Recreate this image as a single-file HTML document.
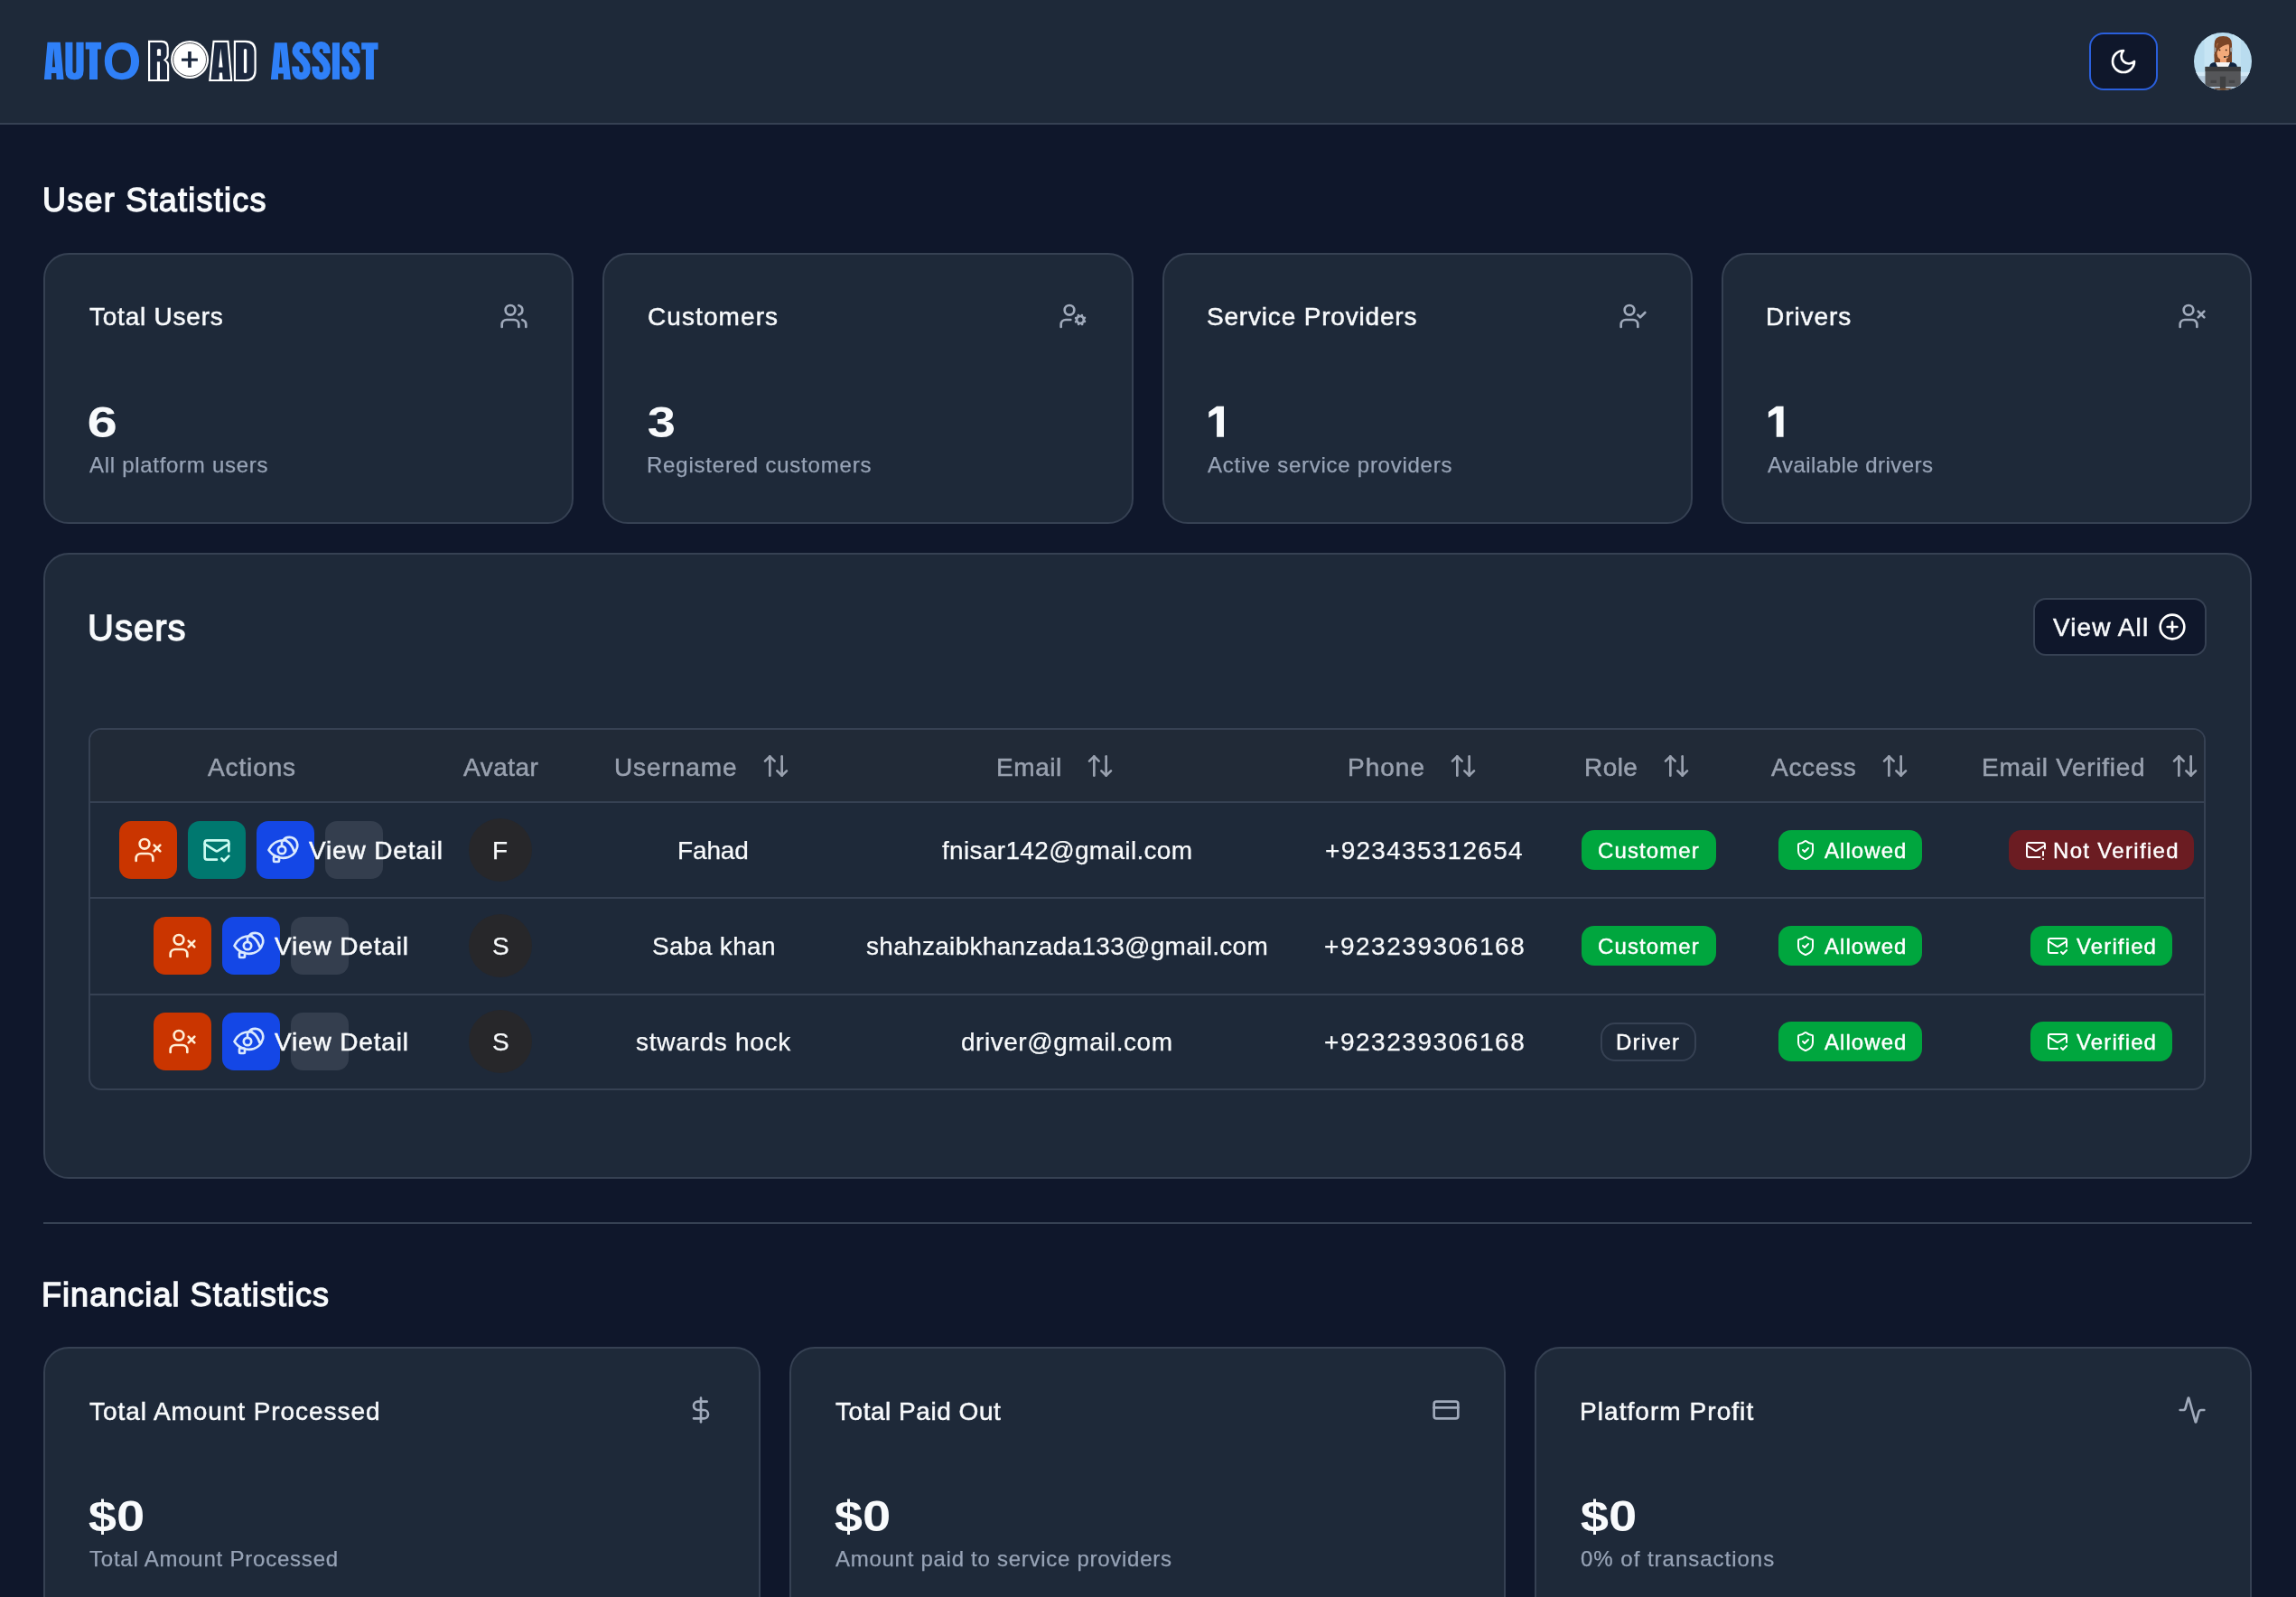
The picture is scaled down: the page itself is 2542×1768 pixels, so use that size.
<!DOCTYPE html>
<html><head><meta charset="utf-8">
<style>
*{box-sizing:border-box;margin:0;padding:0}
html,body{width:2542px;height:1768px;overflow:hidden;background:#0f172b;font-family:"Liberation Sans",sans-serif;color:#f8fafc;position:relative}
.a{position:absolute}
.t{position:absolute;white-space:nowrap;line-height:1;will-change:transform}
.ic{position:absolute;fill:none;stroke:currentColor;stroke-linecap:round;stroke-linejoin:round;overflow:visible}
.med{-webkit-text-stroke:0.5px currentColor}
.reg{-webkit-text-stroke:0.25px currentColor}
.sb{-webkit-text-stroke:1.3px currentColor}
.bd{-webkit-text-stroke:0.4px currentColor}
</style></head><body>
<div class="a" style="left:0px;top:0px;width:2542px;height:136px;background:#1e2939"></div>
<div class="a" style="left:0px;top:136px;width:2542px;height:2px;background:#364153"></div>
<svg class="a" style="left:0px;top:0px;width:440px;height:136px" viewBox="0 0 440 136">
<g fill="#2f80f8" fill-rule="evenodd">
<path d="M52.5 46.8H66.8L70.5 87.9H62.6L62.3 81.1H56.9L56.9 87.9H48.9Z M59.3 53.4L57.9 74.3H61.1Z"/>
<path d="M72.4 46.8H80.4V78.5Q80.4 80.9 82.4 80.9Q84.4 80.9 84.4 78.5V46.8H92.6V78Q92.6 88.3 82.5 88.3Q72.4 88.3 72.4 78Z"/>
<path d="M94.7 46.8H112.1V54.5H108V87.9H99V54.5H94.7Z"/>
<path d="M134.9 46.9C146 46.9 154.1 54 154.1 67.6C154.1 81.2 146 88.3 134.9 88.3C123.8 88.3 115.8 81.2 115.8 67.6C115.8 54 123.8 46.9 134.9 46.9Z M134.6 54.7C128.5 54.7 124 58.5 124 67.8C124 77 128.5 80.9 134.6 80.9C140.6 80.9 145 77 145 67.8C145 58.5 140.6 54.7 134.6 54.7Z"/>
<path d="M304 47.2H317.7L321.9 87.9H313.8L313.8 81.5H308L308 87.9H299.9Z M310.6 53.9L309.1 74.6H312.7Z"/>
<path d="M367.9 47.2H376V87.9H367.9Z"/>
<path d="M400.2 47.2H418.6V54.8H413.9V87.9H405V54.8H400.2Z"/>
</g>
<g fill="none" stroke="#2f80f8" stroke-width="8" stroke-linecap="butt">
<path d="M339.6 59V56.5C339.6 52.5 337 50.1 333.6 50.1C330 50.1 327.5 52.5 327.5 57C327.5 62 339.8 66.5 339.8 76C339.8 81 337.5 84.2 333.6 84.2C329.8 84.2 327.3 81.5 327.3 77V73.5"/>
<path d="M361.7 59V56.5C361.7 52.5 359.1 50.1 355.7 50.1C352.1 50.1 349.6 52.5 349.6 57C349.6 62 361.9 66.5 361.9 76C361.9 81 359.6 84.2 355.7 84.2C351.9 84.2 349.4 81.5 349.4 77V73.5"/>
<path d="M394.6 59V56.5C394.6 52.5 392 50.1 388.6 50.1C385 50.1 382.5 52.5 382.5 57C382.5 62 394.8 66.5 394.8 76C394.8 81 392.5 84.2 388.6 84.2C384.8 84.2 382.3 81.5 382.3 77V73.5"/>
</g>
<g fill="#fff">
<path d="M164 44.8H179Q186.8 44.8 186.8 53V61Q186.8 64.5 183.5 66.6Q187.2 68.5 187.2 72V90.1H164Z"/>
<path d="M235.6 44.8H253.4L257.4 90.1H231.1Z"/>
<path d="M258.8 44.8H272Q283.7 44.8 283.7 57V78Q283.7 90.1 272 90.1H258.8Z"/>
</g>
<g fill="#1c283e">
<path d="M166.2 47H178.6Q184.6 47 184.6 53.5V60.5Q184.6 63.5 180.8 66.6Q185 69 185 72.5V87.9H166.2Z"/>
<path d="M237.5 47H251.5L255.1 87.9H233.5Z"/>
<path d="M261 47H271.5Q281.5 47 281.5 57.5V77.5Q281.5 87.9 271.5 87.9H261Z"/>
</g>
<g fill="#fff">
<path d="M173.9 55.5Q173.9 53.9 176 53.9Q178.1 53.9 178.1 55.5V61.8H173.9Z"/>
<path d="M173.9 68.3H177V90H173.9Z"/>
<path d="M244.4 53.6L242.1 74.5H246.6Z"/>
<path d="M243 80.5H246L246.8 90H242.4Z"/>
<rect x="269.9" y="53.9" width="3.3" height="27.1" rx="1.5"/>
<circle cx="210.1" cy="66" r="21"/>
</g>
<circle cx="210.1" cy="66" r="18.4" fill="none" stroke="#3a3d44" stroke-width="0.9"/>
<g fill="#1c283e"><rect x="201" y="64.6" width="17.9" height="3.1"/><rect x="208.1" y="57" width="3.7" height="17.8"/></g>
</svg>
<div class="a" style="left:2313px;top:36px;width:76px;height:64px;background:#0f172b;border:2.5px solid #2a5fdc;border-radius:16px"></div>
<svg class="ic" style="left:2335px;top:52px;width:32px;height:32px;color:#fff;" viewBox="0 0 24 24" stroke-width="2"><path d="M12 3a6 6 0 0 0 9 9 9 9 0 1 1-9-9Z"/></svg>
<svg class="a" style="left:2425px;top:32px;width:72px;height:72px" viewBox="0 0 72 72">
<defs><clipPath id="av"><circle cx="36" cy="36" r="32"/></clipPath></defs>
<g clip-path="url(#av)">
<rect width="72" height="72" fill="#b9dcef"/>
<rect x="15.5" y="0" width="11" height="48" fill="#c6e4f4"/>
<rect x="47" y="0" width="9" height="48" fill="#c3e2f2"/>
<rect x="0" y="47.8" width="72" height="4.5" fill="#d2e8f6"/>
<rect x="0" y="52.3" width="72" height="20" fill="#b4c9dc"/>
<path d="M26.6 37V17Q26.6 8.1 36.3 8.1Q46 8.1 46 17V37Z" fill="#7b4526"/>
<rect x="33" y="30" width="7" height="8" fill="#f0a070"/>
<path d="M29.5 17Q29.5 14.9 36.2 14.9Q43 14.9 43 19V27Q43 34.3 36.2 34.3Q29.5 34.3 29.5 27Z" fill="#f3aa7a"/>
<path d="M28.8 27Q28.5 12 37.5 11Q44.5 11 44.8 17Q39 16.5 33 21Q30.5 23.5 28.8 27Z" fill="#7b4526"/>
<path d="M26.6 28Q26.6 36 30 37.5V29Z" fill="#7b4526"/>
<path d="M46 28Q46 36 42.5 37.5V29Z" fill="#7b4526"/>
<circle cx="32.5" cy="23.4" r="0.9" fill="#3a2010"/>
<circle cx="39.7" cy="23.4" r="0.9" fill="#3a2010"/>
<rect x="26.2" y="20.5" width="2.2" height="5" rx="1" fill="#9a9a9a"/>
<rect x="44.2" y="20.5" width="2.2" height="5" rx="1" fill="#9a9a9a"/>
<path d="M45 26Q45 30.5 38.5 31.2" stroke="#3a3a3a" stroke-width="0.8" fill="none"/>
<circle cx="38" cy="31.1" r="1" fill="#111"/>
<path d="M21.2 41.9Q21.5 37 28 37H44.2Q51.5 37 51.8 41.9Z" fill="#10243f"/>
<path d="M28 37H44.2L42 41.9H30Z" fill="#f4f4f4"/>
<rect x="16.5" y="41.9" width="39.2" height="22.1" fill="#555659"/>
<rect x="16.5" y="41.9" width="39.2" height="5" fill="#3b3c3e"/>
<rect x="32.9" y="52.7" width="6.3" height="15" fill="#3f4042"/>
<rect x="22.5" y="56.8" width="6.4" height="3.2" fill="#444548"/>
<rect x="42.8" y="56.8" width="6.4" height="3.2" fill="#444548"/>
<rect x="26.5" y="65.5" width="19" height="2.5" fill="#6b4a32"/>
</g></svg>
<div class="t sb" style="left:46.60px;top:203.53px;font-size:36px;color:#f8fafc;letter-spacing:1.25px;">User Statistics</div>
<div class="a" style="left:48px;top:280px;width:587.25px;height:300px;background:#1e2939;border:2px solid #364153;border-radius:28px"></div>
<div class="t med" style="left:99.30px;top:337.30px;font-size:28px;color:#f8fafc;letter-spacing:0.77px;">Total Users</div>
<div class="t " style="left:96.90px;top:443.97px;font-size:48px;color:#f8fafc;font-weight:700;transform:scaleX(1.25);transform-origin:2px 0;">6</div>
<div class="t reg" style="left:99.30px;top:502.88px;font-size:24px;color:#97a3b6;letter-spacing:0.706px;">All platform users</div>
<svg class="ic" style="left:553px;top:334px;width:32px;height:32px;color:#a0aabb;" viewBox="0 0 24 24" stroke-width="2"><path d="M16 21v-2a4 4 0 0 0-4-4H6a4 4 0 0 0-4 4v2"/><circle cx="9" cy="7" r="4"/><path d="M22 21v-2a4 4 0 0 0-3-3.87"/><path d="M16 3.13a4 4 0 0 1 0 7.75"/></svg>
<div class="a" style="left:667.25px;top:280px;width:587.25px;height:300px;background:#1e2939;border:2px solid #364153;border-radius:28px"></div>
<div class="t med" style="left:717.20px;top:337.30px;font-size:28px;color:#f8fafc;letter-spacing:1.087px;">Customers</div>
<div class="t " style="left:716.80px;top:443.97px;font-size:48px;color:#f8fafc;font-weight:700;transform:scaleX(1.17);transform-origin:1px 0;">3</div>
<div class="t reg" style="left:716.20px;top:502.88px;font-size:24px;color:#97a3b6;letter-spacing:0.789px;">Registered customers</div>
<svg class="ic" style="left:1172.25px;top:334px;width:32px;height:32px;color:#a0aabb;" viewBox="0 0 24 24" stroke-width="2"><circle cx="18" cy="15" r="3"/><circle cx="9" cy="7" r="4"/><path d="M10 15H6a4 4 0 0 0-4 4v2"/><path d="m21.7 16.4-.9-.3"/><path d="m15.2 13.9-.9-.3"/><path d="m16.6 18.7.3-.9"/><path d="m19.1 12.2.3-.9"/><path d="m19.6 18.7-.4-1"/><path d="m16.8 12.3-.4-1"/><path d="m14.3 16.6 1-.4"/><path d="m20.7 13.8 1-.4"/></svg>
<div class="a" style="left:1286.5px;top:280px;width:587.25px;height:300px;background:#1e2939;border:2px solid #364153;border-radius:28px"></div>
<div class="t med" style="left:1336.40px;top:337.30px;font-size:28px;color:#f8fafc;letter-spacing:0.812px;">Service Providers</div>
<svg class="a" style="left:0;top:0;width:2542px;height:600px;overflow:visible" viewBox="0 0 2542 600"><path fill="#f8fafc" d="M1347.1 449.7H1355.0V483.8H1347.1V457.2L1338.3 462.6V456Z"/></svg>
<div class="t reg" style="left:1337.40px;top:502.88px;font-size:24px;color:#97a3b6;letter-spacing:0.739px;">Active service providers</div>
<svg class="ic" style="left:1791.5px;top:334px;width:32px;height:32px;color:#a0aabb;" viewBox="0 0 24 24" stroke-width="2"><path d="M16 21v-2a4 4 0 0 0-4-4H6a4 4 0 0 0-4 4v2"/><circle cx="9" cy="7" r="4"/><polyline points="16 11 18 13 22 9"/></svg>
<div class="a" style="left:1905.75px;top:280px;width:587.25px;height:300px;background:#1e2939;border:2px solid #364153;border-radius:28px"></div>
<div class="t med" style="left:1955.00px;top:337.30px;font-size:28px;color:#f8fafc;letter-spacing:0.95px;">Drivers</div>
<svg class="a" style="left:0;top:0;width:2542px;height:600px;overflow:visible" viewBox="0 0 2542 600"><path fill="#f8fafc" d="M1966.7 449.7H1974.6V483.8H1966.7V457.2L1957.9 462.6V456Z"/></svg>
<div class="t reg" style="left:1957.00px;top:502.88px;font-size:24px;color:#97a3b6;letter-spacing:0.456px;">Available drivers</div>
<svg class="ic" style="left:2410.75px;top:334px;width:32px;height:32px;color:#a0aabb;" viewBox="0 0 24 24" stroke-width="2"><path d="M16 21v-2a4 4 0 0 0-4-4H6a4 4 0 0 0-4 4v2"/><circle cx="9" cy="7" r="4"/><line x1="17" x2="22" y1="8" y2="13"/><line x1="22" x2="17" y1="8" y2="13"/></svg>
<div class="a" style="left:48px;top:612px;width:2445px;height:693px;background:#1e2939;border:2px solid #364153;border-radius:28px"></div>
<div class="t sb" style="left:96.50px;top:675.34px;font-size:40px;color:#f8fafc;letter-spacing:1.0px;">Users</div>
<div class="a" style="left:2251px;top:662px;width:192px;height:64px;background:#0f172b;border:2px solid #364153;border-radius:14px"></div>
<div class="t med" style="left:2273.00px;top:681.30px;font-size:28px;color:#f8fafc;letter-spacing:1.086px;">View All</div>
<svg class="ic" style="left:2389px;top:678px;width:32px;height:32px;color:#fff;" viewBox="0 0 24 24" stroke-width="2"><circle cx="12" cy="12" r="10"/><path d="M8 12h8"/><path d="M12 8v8"/></svg>
<div class="a" style="left:98px;top:806px;width:2344px;height:401px;border:2px solid #364153;border-radius:14px;overflow:hidden"></div>
<div class="a" style="left:100px;top:808px;width:2340px;height:79px;background:#212a37;border-radius:12px 12px 0 0"></div>
<div class="a" style="left:100px;top:887px;width:2340px;height:2px;background:#364153"></div>
<div class="a" style="left:100px;top:993px;width:2340px;height:2px;background:#364153"></div>
<div class="a" style="left:100px;top:1099.5px;width:2340px;height:2px;background:#364153"></div>
<div class="t med" style="left:229.70px;top:835.70px;font-size:28px;color:#99a1af;letter-spacing:0.883px;">Actions</div>
<div class="t med" style="left:512.80px;top:835.70px;font-size:28px;color:#99a1af;letter-spacing:0.5px;">Avatar</div>
<div class="t med" style="left:679.70px;top:835.70px;font-size:28px;color:#99a1af;letter-spacing:0.9px;">Username</div>
<svg class="ic" style="left:842.7px;top:832px;width:32px;height:32px;color:#99a1af;" viewBox="0 0 24 24" stroke-width="2"><path d="m21 16-4 4-4-4"/><path d="M17 20V4"/><path d="m3 8 4-4 4 4"/><path d="M7 4v16"/></svg>
<div class="t med" style="left:1102.60px;top:835.70px;font-size:28px;color:#99a1af;letter-spacing:0.575px;">Email</div>
<svg class="ic" style="left:1201.7px;top:832px;width:32px;height:32px;color:#99a1af;" viewBox="0 0 24 24" stroke-width="2"><path d="m21 16-4 4-4-4"/><path d="M17 20V4"/><path d="m3 8 4-4 4 4"/><path d="M7 4v16"/></svg>
<div class="t med" style="left:1492.40px;top:835.70px;font-size:28px;color:#99a1af;letter-spacing:1.0px;">Phone</div>
<svg class="ic" style="left:1603.6px;top:832px;width:32px;height:32px;color:#99a1af;" viewBox="0 0 24 24" stroke-width="2"><path d="m21 16-4 4-4-4"/><path d="M17 20V4"/><path d="m3 8 4-4 4 4"/><path d="M7 4v16"/></svg>
<div class="t med" style="left:1753.70px;top:835.70px;font-size:28px;color:#99a1af;letter-spacing:0.433px;">Role</div>
<svg class="ic" style="left:1839.5px;top:832px;width:32px;height:32px;color:#99a1af;" viewBox="0 0 24 24" stroke-width="2"><path d="m21 16-4 4-4-4"/><path d="M17 20V4"/><path d="m3 8 4-4 4 4"/><path d="M7 4v16"/></svg>
<div class="t med" style="left:1960.70px;top:835.70px;font-size:28px;color:#99a1af;letter-spacing:0.7px;">Access</div>
<svg class="ic" style="left:2081.5px;top:832px;width:32px;height:32px;color:#99a1af;" viewBox="0 0 24 24" stroke-width="2"><path d="m21 16-4 4-4-4"/><path d="M17 20V4"/><path d="m3 8 4-4 4 4"/><path d="M7 4v16"/></svg>
<div class="t med" style="left:2193.90px;top:835.70px;font-size:28px;color:#99a1af;letter-spacing:0.731px;">Email Verified</div>
<svg class="ic" style="left:2403px;top:832px;width:32px;height:32px;color:#99a1af;" viewBox="0 0 24 24" stroke-width="2"><path d="m21 16-4 4-4-4"/><path d="M17 20V4"/><path d="m3 8 4-4 4 4"/><path d="M7 4v16"/></svg>
<div class="a" style="left:132px;top:909px;width:64px;height:64px;background:#ca3500;border-radius:13px"></div>
<svg class="ic" style="left:148px;top:925px;width:32px;height:32px;color:#ffedd4;" viewBox="0 0 24 24" stroke-width="2"><path d="M16 21v-2a4 4 0 0 0-4-4H6a4 4 0 0 0-4 4v2"/><circle cx="9" cy="7" r="4"/><line x1="17" x2="22" y1="8" y2="13"/><line x1="22" x2="17" y1="8" y2="13"/></svg>
<div class="a" style="left:208px;top:909px;width:64px;height:64px;background:#00786f;border-radius:13px"></div>
<svg class="ic" style="left:224px;top:925px;width:32px;height:32px;color:#cbfbf1;" viewBox="0 0 24 24" stroke-width="2"><path d="M22 13V6a2 2 0 0 0-2-2H4a2 2 0 0 0-2 2v12c0 1.1.9 2 2 2h8"/><path d="m22 7-8.97 5.7a1.94 1.94 0 0 1-2.06 0L2 7"/><path d="m16 19 2 2 4-4"/></svg>
<div class="a" style="left:284px;top:909px;width:64px;height:64px;background:#1447e6;border-radius:13px"></div>
<div class="a" style="left:360px;top:909px;width:64px;height:64px;background:#343e4e;border-radius:13px"></div>
<svg class="ic" style="left:284px;top:909px;width:64px;height:64px;color:#dbeafe" viewBox="0 0 64 64" stroke-width="2.67"><path d="M13.5 32C18 23 26 20.5 33 21.5 M13.5 32C18 39 27 42.5 35 40C39 38.5 42 36 43.5 33"/><path d="M29.5 21.5C32 17 41 16 44.5 23C46.5 28 44 32 42 34 M32.5 21.5C37 24 40 28 41.5 33.5"/><circle cx="28" cy="32" r="4.2"/><rect x="19" y="39.5" width="6" height="5.5" rx="1"/><path d="M28 23.5V27.5"/></svg>
<div class="t med" style="left:341.60px;top:928.30px;font-size:28px;color:#f8fafc;letter-spacing:0.84px;">View Detail</div>
<div class="a" style="left:519px;top:906px;width:70px;height:70px;background:#27272a;border-radius:50%"></div>
<div class="t reg" style="left:545.00px;top:928.30px;font-size:28px;color:#f8fafc;">F</div>
<div class="t reg" style="left:750.25px;top:928.30px;font-size:28px;color:#f8fafc;letter-spacing:-0.125px;">Fahad</div>
<div class="t reg" style="left:1043.05px;top:928.30px;font-size:28px;color:#f8fafc;letter-spacing:0.328px;">fnisar142@gmail.com</div>
<div class="t reg" style="left:1467.30px;top:928.30px;font-size:28px;color:#f8fafc;letter-spacing:1.283px;">+923435312654</div>
<div class="a" style="left:1751px;top:919px;width:149px;height:44px;background:#00a63e;border-radius:14px"></div>
<div class="t bd" style="left:1768.85px;top:929.88px;font-size:24px;color:#fff;letter-spacing:1.1px;">Customer</div>
<div class="a" style="left:1969px;top:919px;width:159px;height:44px;background:#00a63e;border-radius:14px"></div>
<svg class="ic" style="left:1986.6px;top:929px;width:24px;height:24px;color:#fff;" viewBox="0 0 24 24" stroke-width="2"><path d="M20 13c0 5-3.5 7.5-7.66 8.95a1 1 0 0 1-.67-.01C7.5 20.5 4 18 4 13V6a1 1 0 0 1 1-1c2 0 4.5-1.2 6.24-2.72a1.17 1.17 0 0 1 1.52 0C14.51 3.81 17 5 19 5a1 1 0 0 1 1 1z"/><path d="m9 12 2 2 4-4"/></svg>
<div class="t bd" style="left:2020.00px;top:929.88px;font-size:24px;color:#fff;letter-spacing:1.067px;">Allowed</div>
<div class="a" style="left:2224px;top:919px;width:205px;height:44px;background:#6b1c22;border-radius:14px"></div>
<svg class="ic" style="left:2241.7px;top:929px;width:24px;height:24px;color:#fff;" viewBox="0 0 24 24" stroke-width="2"><path d="M22 10.5V6a2 2 0 0 0-2-2H4a2 2 0 0 0-2 2v12c0 1.1.9 2 2 2h12.5"/><path d="m22 7-8.97 5.7a1.94 1.94 0 0 1-2.06 0L2 7"/><path d="M20 14v4"/><path d="M20 22v.01"/></svg>
<div class="t bd" style="left:2273.00px;top:929.88px;font-size:24px;color:#fff;letter-spacing:1.318px;">Not Verified</div>
<div class="a" style="left:170px;top:1015px;width:64px;height:64px;background:#ca3500;border-radius:13px"></div>
<svg class="ic" style="left:186px;top:1031px;width:32px;height:32px;color:#ffedd4;" viewBox="0 0 24 24" stroke-width="2"><path d="M16 21v-2a4 4 0 0 0-4-4H6a4 4 0 0 0-4 4v2"/><circle cx="9" cy="7" r="4"/><line x1="17" x2="22" y1="8" y2="13"/><line x1="22" x2="17" y1="8" y2="13"/></svg>
<div class="a" style="left:246px;top:1015px;width:64px;height:64px;background:#1447e6;border-radius:13px"></div>
<div class="a" style="left:322px;top:1015px;width:64px;height:64px;background:#343e4e;border-radius:13px"></div>
<svg class="ic" style="left:246px;top:1015px;width:64px;height:64px;color:#dbeafe" viewBox="0 0 64 64" stroke-width="2.67"><path d="M13.5 32C18 23 26 20.5 33 21.5 M13.5 32C18 39 27 42.5 35 40C39 38.5 42 36 43.5 33"/><path d="M29.5 21.5C32 17 41 16 44.5 23C46.5 28 44 32 42 34 M32.5 21.5C37 24 40 28 41.5 33.5"/><circle cx="28" cy="32" r="4.2"/><rect x="19" y="39.5" width="6" height="5.5" rx="1"/><path d="M28 23.5V27.5"/></svg>
<div class="t med" style="left:303.60px;top:1034.30px;font-size:28px;color:#f8fafc;letter-spacing:0.84px;">View Detail</div>
<div class="a" style="left:519px;top:1012px;width:70px;height:70px;background:#27272a;border-radius:50%"></div>
<div class="t reg" style="left:544.50px;top:1034.30px;font-size:28px;color:#f8fafc;">S</div>
<div class="t reg" style="left:722.15px;top:1034.30px;font-size:28px;color:#f8fafc;letter-spacing:0.337px;">Saba khan</div>
<div class="t reg" style="left:958.74px;top:1034.30px;font-size:28px;color:#f8fafc;letter-spacing:0.304px;">shahzaibkhanzada133@gmail.com</div>
<div class="t reg" style="left:1466.25px;top:1034.30px;font-size:28px;color:#f8fafc;letter-spacing:1.542px;">+923239306168</div>
<div class="a" style="left:1751px;top:1025px;width:149px;height:44px;background:#00a63e;border-radius:14px"></div>
<div class="t bd" style="left:1768.85px;top:1035.88px;font-size:24px;color:#fff;letter-spacing:1.1px;">Customer</div>
<div class="a" style="left:1969px;top:1025px;width:159px;height:44px;background:#00a63e;border-radius:14px"></div>
<svg class="ic" style="left:1986.6px;top:1035px;width:24px;height:24px;color:#fff;" viewBox="0 0 24 24" stroke-width="2"><path d="M20 13c0 5-3.5 7.5-7.66 8.95a1 1 0 0 1-.67-.01C7.5 20.5 4 18 4 13V6a1 1 0 0 1 1-1c2 0 4.5-1.2 6.24-2.72a1.17 1.17 0 0 1 1.52 0C14.51 3.81 17 5 19 5a1 1 0 0 1 1 1z"/><path d="m9 12 2 2 4-4"/></svg>
<div class="t bd" style="left:2020.00px;top:1035.88px;font-size:24px;color:#fff;letter-spacing:1.067px;">Allowed</div>
<div class="a" style="left:2248px;top:1025px;width:157px;height:44px;background:#00a63e;border-radius:14px"></div>
<svg class="ic" style="left:2265.8px;top:1035px;width:24px;height:24px;color:#fff;" viewBox="0 0 24 24" stroke-width="2"><path d="M22 13V6a2 2 0 0 0-2-2H4a2 2 0 0 0-2 2v12c0 1.1.9 2 2 2h8"/><path d="m22 7-8.97 5.7a1.94 1.94 0 0 1-2.06 0L2 7"/><path d="m16 19 2 2 4-4"/></svg>
<div class="t bd" style="left:2299.10px;top:1035.88px;font-size:24px;color:#fff;letter-spacing:1.129px;">Verified</div>
<div class="a" style="left:170px;top:1121px;width:64px;height:64px;background:#ca3500;border-radius:13px"></div>
<svg class="ic" style="left:186px;top:1137px;width:32px;height:32px;color:#ffedd4;" viewBox="0 0 24 24" stroke-width="2"><path d="M16 21v-2a4 4 0 0 0-4-4H6a4 4 0 0 0-4 4v2"/><circle cx="9" cy="7" r="4"/><line x1="17" x2="22" y1="8" y2="13"/><line x1="22" x2="17" y1="8" y2="13"/></svg>
<div class="a" style="left:246px;top:1121px;width:64px;height:64px;background:#1447e6;border-radius:13px"></div>
<div class="a" style="left:322px;top:1121px;width:64px;height:64px;background:#343e4e;border-radius:13px"></div>
<svg class="ic" style="left:246px;top:1121px;width:64px;height:64px;color:#dbeafe" viewBox="0 0 64 64" stroke-width="2.67"><path d="M13.5 32C18 23 26 20.5 33 21.5 M13.5 32C18 39 27 42.5 35 40C39 38.5 42 36 43.5 33"/><path d="M29.5 21.5C32 17 41 16 44.5 23C46.5 28 44 32 42 34 M32.5 21.5C37 24 40 28 41.5 33.5"/><circle cx="28" cy="32" r="4.2"/><rect x="19" y="39.5" width="6" height="5.5" rx="1"/><path d="M28 23.5V27.5"/></svg>
<div class="t med" style="left:303.60px;top:1140.30px;font-size:28px;color:#f8fafc;letter-spacing:0.84px;">View Detail</div>
<div class="a" style="left:519px;top:1118px;width:70px;height:70px;background:#27272a;border-radius:50%"></div>
<div class="t reg" style="left:544.50px;top:1140.30px;font-size:28px;color:#f8fafc;">S</div>
<div class="t reg" style="left:704.10px;top:1140.30px;font-size:28px;color:#f8fafc;letter-spacing:0.709px;">stwards hock</div>
<div class="t reg" style="left:1064.00px;top:1140.30px;font-size:28px;color:#f8fafc;letter-spacing:0.533px;">driver@gmail.com</div>
<div class="t reg" style="left:1466.25px;top:1140.30px;font-size:28px;color:#f8fafc;letter-spacing:1.542px;">+923239306168</div>
<div class="a" style="left:1772px;top:1131.5px;width:105.5px;height:43px;border:2px solid #364153;border-radius:16px"></div>
<div class="t bd" style="left:1789.00px;top:1141.88px;font-size:24px;color:#fff;letter-spacing:1.2px;">Driver</div>
<div class="a" style="left:1969px;top:1131px;width:159px;height:44px;background:#00a63e;border-radius:14px"></div>
<svg class="ic" style="left:1986.6px;top:1141px;width:24px;height:24px;color:#fff;" viewBox="0 0 24 24" stroke-width="2"><path d="M20 13c0 5-3.5 7.5-7.66 8.95a1 1 0 0 1-.67-.01C7.5 20.5 4 18 4 13V6a1 1 0 0 1 1-1c2 0 4.5-1.2 6.24-2.72a1.17 1.17 0 0 1 1.52 0C14.51 3.81 17 5 19 5a1 1 0 0 1 1 1z"/><path d="m9 12 2 2 4-4"/></svg>
<div class="t bd" style="left:2020.00px;top:1141.88px;font-size:24px;color:#fff;letter-spacing:1.067px;">Allowed</div>
<div class="a" style="left:2248px;top:1131px;width:157px;height:44px;background:#00a63e;border-radius:14px"></div>
<svg class="ic" style="left:2265.8px;top:1141px;width:24px;height:24px;color:#fff;" viewBox="0 0 24 24" stroke-width="2"><path d="M22 13V6a2 2 0 0 0-2-2H4a2 2 0 0 0-2 2v12c0 1.1.9 2 2 2h8"/><path d="m22 7-8.97 5.7a1.94 1.94 0 0 1-2.06 0L2 7"/><path d="m16 19 2 2 4-4"/></svg>
<div class="t bd" style="left:2299.10px;top:1141.88px;font-size:24px;color:#fff;letter-spacing:1.129px;">Verified</div>
<div class="a" style="left:48px;top:1353px;width:2445px;height:2px;background:#364153"></div>
<div class="t sb" style="left:46.30px;top:1415.53px;font-size:36px;color:#f8fafc;letter-spacing:1.053px;">Financial Statistics</div>
<div class="a" style="left:48px;top:1491px;width:793.67px;height:400px;background:#1e2939;border:2px solid #364153;border-radius:28px"></div>
<div class="t med" style="left:99.20px;top:1549.10px;font-size:28px;color:#f8fafc;letter-spacing:0.929px;">Total Amount Processed</div>
<div class="t " style="left:98.20px;top:1655.17px;font-size:48px;color:#f8fafc;font-weight:700;transform:scaleX(1.17);transform-origin:1px 0;">$0</div>
<div class="t reg" style="left:99.20px;top:1714.28px;font-size:24px;color:#97a3b6;letter-spacing:0.776px;">Total Amount Processed</div>
<svg class="ic" style="left:759.5px;top:1544.6px;width:32px;height:32px;color:#a0aabb;" viewBox="0 0 24 24" stroke-width="2"><line x1="12" x2="12" y1="2" y2="22"/><path d="M17 5H9.5a3.5 3.5 0 0 0 0 7h5a3.5 3.5 0 0 1 0 7H6"/></svg>
<div class="a" style="left:873.67px;top:1491px;width:793.67px;height:400px;background:#1e2939;border:2px solid #364153;border-radius:28px"></div>
<div class="t med" style="left:925.10px;top:1549.10px;font-size:28px;color:#f8fafc;letter-spacing:0.531px;">Total Paid Out</div>
<div class="t " style="left:924.10px;top:1655.17px;font-size:48px;color:#f8fafc;font-weight:700;transform:scaleX(1.17);transform-origin:1px 0;">$0</div>
<div class="t reg" style="left:925.10px;top:1714.28px;font-size:24px;color:#97a3b6;letter-spacing:0.723px;">Amount paid to service providers</div>
<svg class="ic" style="left:1585.17px;top:1544.6px;width:32px;height:32px;color:#a0aabb;" viewBox="0 0 24 24" stroke-width="2"><rect width="20" height="14" x="2" y="5" rx="2"/><line x1="2" x2="22" y1="10" y2="10"/></svg>
<div class="a" style="left:1699.33px;top:1491px;width:793.67px;height:400px;background:#1e2939;border:2px solid #364153;border-radius:28px"></div>
<div class="t med" style="left:1748.50px;top:1549.10px;font-size:28px;color:#f8fafc;letter-spacing:1.057px;">Platform Profit</div>
<div class="t " style="left:1749.50px;top:1655.17px;font-size:48px;color:#f8fafc;font-weight:700;transform:scaleX(1.17);transform-origin:1px 0;">$0</div>
<div class="t reg" style="left:1749.50px;top:1714.28px;font-size:24px;color:#97a3b6;letter-spacing:0.982px;">0% of transactions</div>
<svg class="ic" style="left:2410.83px;top:1544.6px;width:32px;height:32px;color:#a0aabb;" viewBox="0 0 24 24" stroke-width="2"><path d="M22 12h-2.48a2 2 0 0 0-1.93 1.46l-2.35 8.36a.25.25 0 0 1-.48 0L9.24 2.18a.25.25 0 0 0-.48 0l-2.35 8.36A2 2 0 0 1 4.49 12H2"/></svg>
</body></html>
